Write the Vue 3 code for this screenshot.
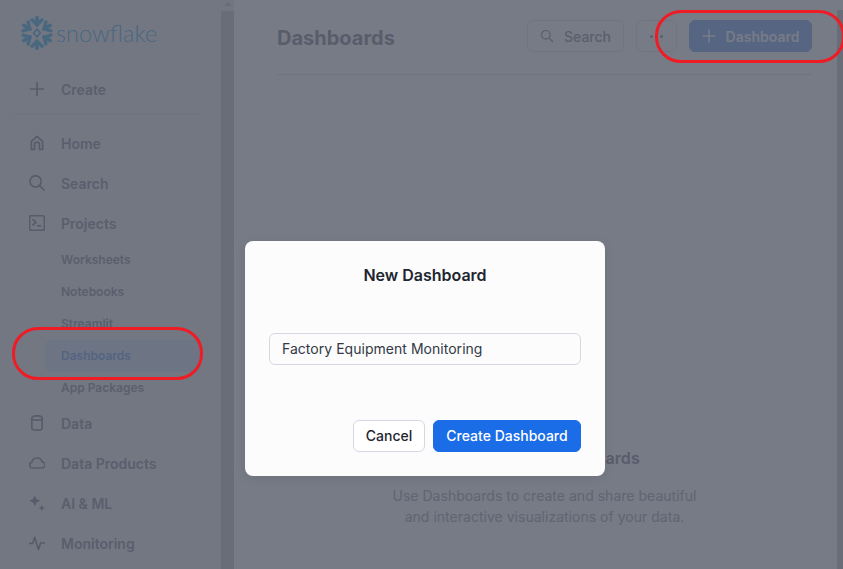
<template>
  <div class="page">
    <aside class="sidebar">
      <div class="logo">
        <svg class="logo-mark" width="34" height="34" viewBox="-16 -16 32 32">
          <g v-for="a in arms" :key="a" :transform="`rotate(${a})`" fill="none" stroke="#8ccdee" stroke-width="3.4" stroke-linecap="round" stroke-linejoin="round">
            <path d="M0 -7.5V-14.4" />
            <path d="M-4.8 -12.4L0 -7.8L4.8 -12.4" stroke-width="3.2" />
          </g>
          <path d="M0 -3.6L3.1 0L0 3.6L-3.1 0Z" fill="none" stroke="#8ccdee" stroke-width="1.6" />
        </svg>
        <span class="logo-text">snowflake</span>
      </div>

      <div class="nav-item create">
        <svg class="icon" viewBox="0 0 16 16"><path d="M8 1.5v13M1.5 8h13" /></svg>
        <span>Create</span>
      </div>
      <div class="nav-sep"></div>

      <template v-for="item in nav" :key="item.label">
        <div v-if="item.sub" class="sub-item" :class="{ active: item.active }">{{ item.label }}</div>
        <div v-else class="nav-item">
          <svg class="icon" viewBox="0 0 16 16">
            <path :d="item.icon" />
            <path v-if="item.solid" class="solid" :d="item.solid" />
          </svg>
          <span>{{ item.label }}</span>
        </div>
      </template>
    </aside>

    <div class="side-scroll">
      <div class="arrow"></div>
      <div class="thumb"></div>
    </div>

    <main class="main">
      <header class="head">
        <h1>Dashboards</h1>
        <div class="actions">
          <button class="btn search">
            <svg width="14" height="14" viewBox="0 0 14 14" fill="none" stroke="currentColor" stroke-width="1.2">
              <circle cx="5.8" cy="5.8" r="4.3" />
              <path d="M9 9l4 4" />
            </svg>
            Search
          </button>
          <button class="btn more"><i></i><i></i><i></i></button>
          <button class="btn primary">
            <svg width="14" height="14" viewBox="0 0 14 14" fill="none" stroke="currentColor" stroke-width="1.6"><path d="M7 .5v13M.5 7h13" /></svg>
            Dashboard
          </button>
        </div>
      </header>
      <div class="empty">
        <h2>Welcome to Dashboards</h2>
        <p>Use Dashboards to create and share beautiful<br />and interactive visualizations of your data.</p>
      </div>
    </main>

    <div class="page-scroll"></div>

    <div class="overlay">
      <div class="modal">
        <div class="modal-title">New Dashboard</div>
        <input class="field" type="text" value="Factory Equipment Monitoring" />
        <div class="modal-actions">
          <button class="m-btn cancel">Cancel</button>
          <button class="m-btn create-btn">Create Dashboard</button>
        </div>
      </div>
    </div>

    <div class="mark mark-nav"></div>
    <div class="mark mark-btn"></div>
  </div>
</template>

<script setup>
const arms = [0, 60, 120, 180, 240, 300]

const nav = [
  { label: 'Home', icon: 'M2.4 14.4V6.4L8 1.4l5.6 5v8h-3.2V9.6a2.4 2.4 0 0 0-4.8 0v4.8z' },
  { label: 'Search', icon: 'M6.6 .8a5.6 5.6 0 1 0 0 11.2a5.6 5.6 0 0 0 0-11.2zM10.6 10.6l4.4 4.4' },
  { label: 'Projects', icon: 'M2.4 .6h11.2a1.8 1.8 0 0 1 1.8 1.8v11.2a1.8 1.8 0 0 1-1.8 1.8H2.4a1.8 1.8 0 0 1-1.8-1.8V2.4a1.8 1.8 0 0 1 1.8-1.8zM4 4.6l3 2.7l-3 2.7M8.6 10.8h3' },
  { label: 'Worksheets', sub: true },
  { label: 'Notebooks', sub: true },
  { label: 'Streamlit', sub: true },
  { label: 'Dashboards', sub: true, active: true },
  { label: 'App Packages', sub: true },
  { label: 'Data', icon: 'M2.8 3c0-1.3 2.2-2.2 5.2-2.2s5.2.9 5.2 2.2v10c0 1.3-2.2 2.2-5.2 2.2s-5.2-.9-5.2-2.2zM2.8 3c0 1.3 2.2 2.2 5.2 2.2s5.2-.9 5.2-2.2' },
  { label: 'Data Products', icon: 'M3.6 13a3 3 0 0 1-.7-5.9C3.4 4.6 5.5 3 8 3s4.4 1.5 5 3.8a3.1 3.1 0 0 1-.4 6.2z' },
  {
    label: 'AI & ML',
    icon: '',
    solid: 'M5.8 .4l1.7 3.7l3.9 1.7l-3.9 1.7l-1.7 3.9l-1.7-3.9L.2 5.800l3.900-1.700zM12.800 9.800l1 2.200l2.200 1l-2.200 1l-1 2.200l-1-2.200l-2.200-1l2.200-1z'
  },
  { label: 'Monitoring', icon: 'M.2 8.400h3.400l2.200-6l3.600 12l2.200-6.400h4.200' }
]
</script>

<style>
html,
body {
  margin: 0;
  overflow: hidden;
}
</style>

<style scoped>
.page {
  display: flex;
  height: 569px;
  width: 843px;
  overflow: hidden;
  position: relative;
  background: #fff;
  font-family: Inter, "Liberation Sans", sans-serif;
}

/* --- sidebar --- */
.sidebar {
  width: 221px;
  flex: none;
  background: #f6f6f6;
  padding: 16px 0 0 0;
  box-sizing: border-box;
}
.logo {
  display: flex;
  align-items: center;
  gap: 2px;
  padding-left: 20px;
  height: 34px;
  margin-bottom: 20px;
}
.logo-text {
  font-family: Lato, sans-serif;
  font-weight: 300;
  font-size: 23.5px;
  line-height: 34px;
  color: #8ccdee;
}
.nav-item {
  display: flex;
  align-items: center;
  height: 40px;
  padding: 0 0 2px 29px;
  box-sizing: border-box;
  gap: 16px;
  font-size: 14px;
  font-weight: 600;
  color: #b4b8c0;
}
.nav-sep {
  height: 1px;
  background: #eaeaec;
  margin: 4px 19px 9px 13px;
}
.icon {
  width: 16px;
  height: 16px;
  flex: none;
  fill: none;
  stroke: #aeb2bb;
  stroke-width: 1.7;
  stroke-linejoin: round;
  stroke-linecap: round;
}
.icon .solid {
  fill: #aeb2bb;
  stroke: none;
}
.sub-item {
  height: 32px;
  line-height: 32px;
  margin-left: 45px;
  padding-left: 16px;
  font-size: 12px;
  font-weight: 600;
  color: #b4b8c0;
  border-radius: 6px;
}
.sub-item.active {
  background: #e6eefa;
  color: #a8c4f6;
  margin-right: 20px;
}

/* --- scrollbars --- */
.side-scroll {
  width: 13px;
  flex: none;
  background: #f2f2f2;
  margin-right: 3px;
  position: relative;
}
.arrow {
  width: 0;
  height: 0;
  border-left: 4px solid transparent;
  border-right: 4px solid transparent;
  border-bottom: 4px solid #dcdcdc;
  margin: 2px auto 5px;
}
.thumb {
  height: 558px;
  background: #dcdcdc;
}
.page-scroll {
  width: 6px;
  flex: none;
  margin-top: 10px;
  background: #dcdcdc;
}

/* --- main --- */
.main {
  flex: 1;
  padding: 0 25px 0 40px;
  min-width: 0;
}
.head {
  display: flex;
  align-items: center;
  justify-content: space-between;
  height: 75px;
  box-sizing: border-box;
  border-bottom: 1px solid #eeeef0;
}
h1 {
  margin: 0;
  padding-top: 2px;
  font-size: 20px;
  font-weight: 700;
  color: #b0b3bb;
}
.actions {
  display: flex;
  gap: 12px;
  padding-bottom: 2px;
}
.btn {
  height: 32px;
  border-radius: 6px;
  box-sizing: border-box;
  border: 1px solid #eeeef1;
  background: #fff;
  font: 500 14px Inter, sans-serif;
  color: #b4b8c0;
  display: flex;
  align-items: center;
  justify-content: center;
  padding: 0;
}
.search {
  width: 97px;
  gap: 10px;
}
.more {
  width: 41px;
  gap: 2px;
}
.more i {
  width: 3px;
  height: 3px;
  border-radius: 50%;
  background: #b4b8c0;
}
.primary {
  width: 123px;
  gap: 10px;
  background: #aac8f6;
  border-color: #aac8f6;
  color: #fff;
  font-weight: 600;
}
.empty {
  text-align: center;
  padding-top: 371px;
}
h2 {
  margin: 0 0 15px;
  font-size: 16px;
  line-height: 24px;
  font-weight: 600;
  letter-spacing: 0.1px;
  color: #b0b3bb;
}
p {
  margin: 0;
  font-size: 14px;
  line-height: 21px;
  letter-spacing: 0.02px;
  color: #c4c7ce;
}

/* --- modal --- */
.overlay {
  position: absolute;
  inset: 0;
  background: rgba(28, 35, 53, 0.6);
  padding: 241px 0 0 245px;
  box-sizing: border-box;
}
.modal {
  width: 360px;
  height: 235px;
  box-sizing: border-box;
  background: #fcfcfd;
  border-radius: 8px;
  padding: 23px 24px 24px;
  display: flex;
  flex-direction: column;
  box-shadow: 0 2px 12px rgba(0, 0, 0, 0.08);
}
.modal-title {
  text-align: center;
  font-size: 16px;
  line-height: 22px;
  font-weight: 600;
  color: #1e252f;
}
.field {
  margin-top: 47px;
  height: 32px;
  box-sizing: border-box;
  border: 1px solid #d5d8e4;
  border-radius: 6px;
  background: #fcfcfd;
  padding: 0 12px 1px;
  font: 400 14px Inter, sans-serif;
  letter-spacing: 0.03px;
  color: #323844;
  outline: none;
}
.modal-actions {
  margin-top: 55px;
  display: flex;
  justify-content: flex-end;
  gap: 8px;
}
.m-btn {
  height: 32px;
  box-sizing: border-box;
  border-radius: 6px;
  font: 500 14px Inter, sans-serif;
  padding: 0 0 2px;
}
.cancel {
  width: 72px;
  background: #fff;
  border: 1px solid #d5d8e4;
  color: #1e252f;
}
.create-btn {
  width: 148px;
  background: #1a6ce7;
  border: 1px solid #1a6ce7;
  color: #fff;
}

/* --- red annotations drawn over the screenshot --- */
.mark {
  position: absolute;
  box-sizing: border-box;
  border: 3px solid #ee1c25;
  border-radius: 26px;
}
.mark-nav {
  left: 12px;
  top: 327px;
  width: 191px;
  height: 53px;
}
.mark-btn {
  left: 655px;
  top: 10px;
  width: 190px;
  height: 53px;
}
</style>
